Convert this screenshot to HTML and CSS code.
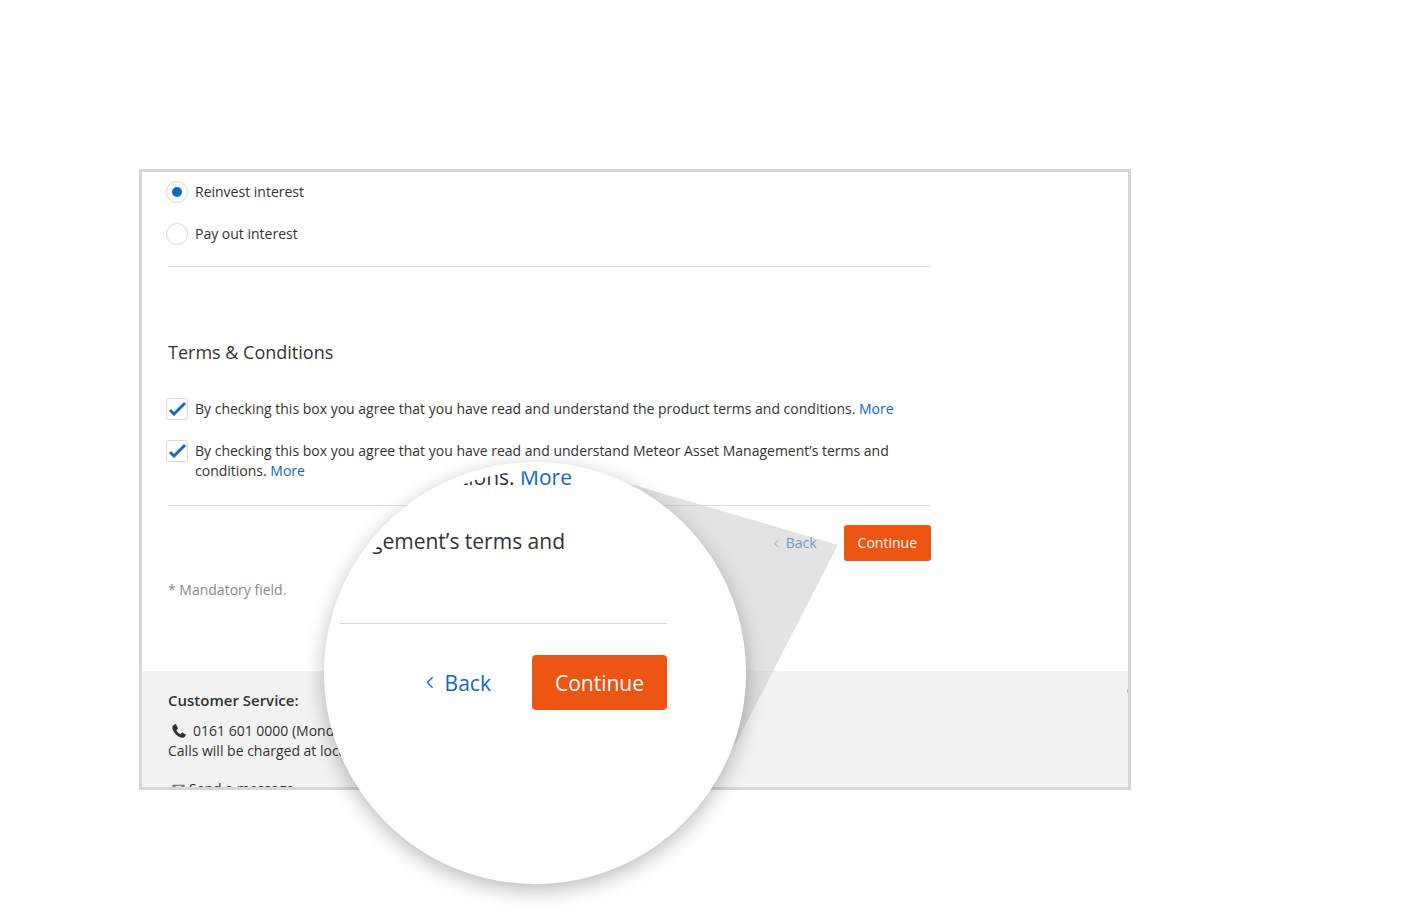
FILE: index.html
```html
<!DOCTYPE html>
<html lang="en">
<head>
    <meta charset="UTF-8">
    <meta name="viewport" content="width=device-width, initial-scale=1.0">
    <title>Terms &amp; Conditions</title>
    <link rel="stylesheet" href="styles.css">
</head>
<body>
    <div class="stage">
        <div class="frame">
            <form class="application">
                <div class="options">
                    <label class="option">
                        <input class="radio" type="radio" name="interest" value="reinvest" checked>
                        <span>Reinvest interest</span>
                    </label>
                    <label class="option">
                        <input class="radio" type="radio" name="interest" value="payout">
                        <span>Pay out interest</span>
                    </label>
                </div>
                <h2>Terms &amp; Conditions</h2>
                <div class="options terms">
                    <div class="option">
                        <input class="checkbox" type="checkbox" id="productTerms" checked>
                        <label for="productTerms">By checking this box you agree that you have read and understand the product terms and conditions. <a href="#">More</a></label>
                    </div>
                    <div class="option">
                        <input class="checkbox" type="checkbox" id="meteorTerms" checked>
                        <label for="meteorTerms">By checking this box you agree that you have read and understand Meteor Asset Management’s terms and conditions. <a href="#">More</a></label>
                    </div>
                </div>
                <div class="actions">
                    <a class="back" href="#">
                        <svg class="chevron" viewBox="0 0 6 10"><path d="M5 1 1 5l4 4"/></svg>
                        Back
                    </a>
                    <button class="continue" type="button">Continue</button>
                </div>
                <p class="mandatory">* Mandatory field.</p>
            </form>
            <footer class="footer">
                <div class="service">
                    <h3>Customer Service:</h3>
                    <p class="phone">
                        <svg class="phone-icon" viewBox="0 0 14 14"><path d="M3.2.3C2.300.5.7 1.500.4 2.700c-.4 1.800.6 4.400 2.700 6.900 2.200 2.500 4.700 4 6.700 4.100 1.600.1 3.300-.9 3.900-2.300.1-.3.1-.6-.2-.8l-2.800-1.900c-.3-.2-.6-.1-.9.1l-1.200 1.200c-.3.2-.6.200-.9 0-1.400-.9-2.400-2.100-3.100-3.500-.1-.3 0-.6.200-.8l.9-.8c.3-.3.3-.5.200-.8L4.200.7C4 .3 3.600.2 3.200.3z"/></svg>
                        0161 601 0000 (Monday to Friday)
                    </p>
                    <p>Calls will be charged at local rate.</p>
                    <p class="message">
                        <svg class="mail-icon" viewBox="0 0 14 10"><path d="M1 1h12v8H1zM1 1l6 4 6-4"/></svg>
                        Send a message
                    </p>
                </div>
                <span class="seal"></span>
            </footer>
        </div>

        <!-- magnified view of the buttons -->
        <svg class="pointer" viewBox="0 0 303 290"><path d="M303 83 61 12 0 211l200 72z"/></svg>
        <div class="lens">
            <div class="lens-content">
                <p class="lens-more">conditions. <a href="#">More</a></p>
                <p class="lens-terms"><span>Management’s terms and</span></p>
                <div class="actions lens-actions">
                    <a class="back" href="#">
                        <svg class="chevron" viewBox="0 0 6 10"><path d="M5 1 1 5l4 4"/></svg>
                        Back
                    </a>
                    <button class="continue" type="button">Continue</button>
                </div>
            </div>
        </div>
    </div>
</body>
</html>
```
FILE: styles.css
```css
* {
    box-sizing: border-box;
}
body {
    margin: 0;
    background-color: #fff;
    color: #333;
    font-family: "Open Sans", sans-serif;
    font-size: 14px;
    line-height: 20px;
}
h2, h3, p {
    margin: 0;
}
a {
    color: #0f68c5;
    text-decoration: none;
}
.stage {
    position: relative;
    margin: 169px 270px 0 139px;
    padding-bottom: 126px;
}
.frame {
    border: 3px solid #d6d6d6;
    overflow: hidden;
}

/* form */
.application {
    padding: 10px 197px 71px 26px;
}
.options {
    display: flex;
    flex-direction: column;
    gap: 22px;
    padding-bottom: 22px;
    border-bottom: 1px solid #dedede;
}
.option {
    display: flex;
    gap: 7px;
}
.radio, .checkbox {
    appearance: none;
    flex: none;
    width: 22px;
    height: 22px;
    margin: -1px 0 -1px -2px;
    border: 1px solid #d9d9d9;
    background-color: #fff;
}
.radio {
    display: grid;
    place-items: center;
    border-radius: 50%;
}
.radio:checked::before {
    content: "";
    width: 10px;
    height: 10px;
    border-radius: 50%;
    background-color: #0f68c5;
}
.checkbox {
    border-radius: 3px;
}
.checkbox:checked::before {
    content: "";
    display: block;
    width: 20px;
    height: 20px;
    background-color: #0f68c5;
    clip-path: polygon(2px 12px, 4px 10px, 7px 13px, 17px 3px, 19px 5px, 7px 17px);
}
h2 {
    margin: 73px 0 35px;
    font-size: 18px;
    font-weight: 400;
    line-height: 24px;
}
.terms {
    padding-bottom: 24px;
}
.actions {
    display: flex;
    justify-content: flex-end;
    align-items: center;
    gap: 27px;
    margin: 19px 0;
}
.back {
    display: flex;
    align-items: center;
    gap: 7px;
}
.chevron {
    width: 5px;
    height: 9px;
    fill: none;
    stroke: currentColor;
    stroke-width: 1;
}
.continue {
    height: 36px;
    padding: 0 14px;
    border: 0;
    border-radius: 3px;
    background-color: #ed5512;
    color: #fff;
    font: inherit;
}
.mandatory {
    color: #8a8a8a;
}

/* footer */
.footer {
    display: flex;
    justify-content: space-between;
    height: 116px;
    padding: 19px 0 0 26px;
    overflow: hidden;
    background-color: #f2f2f2;
}
h3 {
    margin-bottom: 11px;
    font-size: 15px;
    font-weight: 600;
    line-height: 20px;
}
.phone, .message {
    display: flex;
    align-items: center;
    padding-left: 4px;
}
.phone {
    gap: 7px;
}
.message {
    gap: 4px;
    margin-top: 18px;
}
.phone-icon {
    width: 14px;
    height: 14px;
    fill: #333;
}
.mail-icon {
    width: 13px;
    height: 10px;
    fill: none;
    stroke: #555;
}
.seal {
    width: 8px;
    height: 8px;
    margin: -3px -7px 0 0;
    border: 1px solid #aaa;
    border-radius: 50%;
}

/* lens */
.pointer {
    position: absolute;
    top: 293px;
    right: 293px;
    width: 303px;
    height: 290px;
    fill: rgba(200, 200, 200, 0.5);
}
.lens {
    position: absolute;
    top: 293px;
    right: 385px;
    width: 422px;
    height: 422px;
    border: 9px solid #fff;
    border-radius: 50%;
    overflow: hidden;
    background-color: #fff;
    box-shadow: 0 6px 20px rgba(0, 0, 0, 0.27);
    font-size: 21px;
    line-height: 30px;
}
.lens-content {
    margin-top: -9px;
    padding: 0 70px 0 7px;
    white-space: nowrap;
}
.lens-more {
    padding-right: 95px;
    text-align: right;
}
.lens-terms {
    display: flex;
    justify-content: flex-end;
    margin-top: 34px;
    padding: 0 102px 67px 0;
    border-bottom: 1px solid #d6d6d6;
}
.lens-actions {
    gap: 41px;
    margin: 31px 0 0;
}
.lens-actions .back {
    gap: 11px;
}
.lens-actions .chevron {
    width: 8px;
    height: 13px;
}
.lens-actions .continue {
    height: 55px;
    padding: 0 23px;
    border-radius: 4px;
}
```
